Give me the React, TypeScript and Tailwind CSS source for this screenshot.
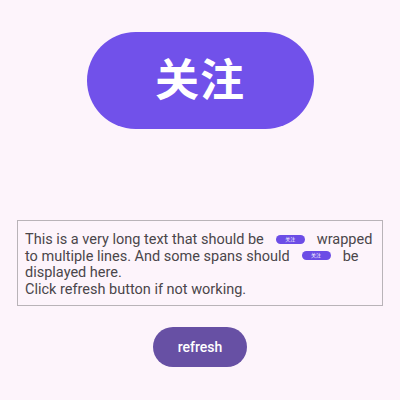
import React from "react";

function Chip() {
  return (
    <span className="inline-flex items-center justify-center align-middle mx-[12px] w-[29px] h-[9px] rounded-full bg-[#6c4de6] text-white text-[5px] leading-none relative -top-[1px]">
      关注
    </span>
  );
}

export default function App() {
  return (
    <div
      className="w-[400px] h-[400px] bg-[#fdf4fb] flex flex-col items-center pt-[32px]"
      style={{ fontFamily: "Roboto, 'Noto Sans CJK SC', sans-serif" }}
    >
      <button className="w-[227px] h-[97px] rounded-full bg-[#7151ea] text-white text-[44px] font-bold flex items-center justify-center tracking-[1px]">
        关注
      </button>

      <div className="mt-[91px] w-[366px] h-[86px] border border-[#b9b3b8] px-[7px] pt-[11px] text-[14.5px] leading-[16.6px] text-[#4a464a]">
        This is a very long text that should be<Chip />wrapped to multiple lines. And some spans should<Chip />be displayed here.
        <br />
        Click refresh button if not working.
      </div>

      <button className="mt-[21px] w-[94px] h-[40px] rounded-full bg-[#6750a4] text-white text-[14px] font-medium flex items-center justify-center">
        refresh
      </button>
    </div>
  );
}
